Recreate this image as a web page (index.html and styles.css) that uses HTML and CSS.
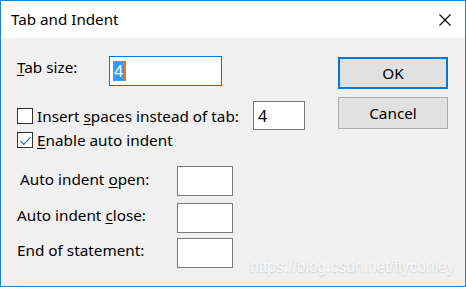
FILE: index.html
```html
<!DOCTYPE html>
<html>
<head>
<meta charset="utf-8">
<link rel="stylesheet" href="styles.css">
</head>
<body>
<div class="window">
  <div class="titlebar">
    <span class="title">Tab and Indent</span>
    <svg class="close" width="12" height="12" viewBox="0 0 12 12"><path d="M0.5 0.5L11.5 11.5M11.5 0.5L0.5 11.5" stroke="#000" stroke-width="1.1" fill="none"/></svg>
  </div>
  <div class="content">
    <div class="left">
      <div class="row r1">
        <span class="label l1"><u>T</u>ab size:</span>
        <div class="field focus w1"><span class="sel">4</span><span class="caret"></span></div>
      </div>
      <div class="row r2">
        <span class="check"></span>
        <span class="label l2">Insert <u>s</u>paces instead of tab:</span>
        <div class="field w2"><span class="val">4</span></div>
      </div>
      <div class="row r3">
        <span class="check"><svg width="14" height="14" viewBox="0 0 14 14"><polyline points="2.5,8 5.8,11.3 12.5,4.2" stroke="#2a6bb0" stroke-width="1.2" fill="none"/></svg></span>
        <span class="label l2"><u>E</u>nable auto indent</span>
      </div>
      <div class="row r4">
        <span class="label l3 ind">Auto indent <u>o</u>pen:</span>
        <div class="field w3"></div>
      </div>
      <div class="row r5">
        <span class="label l3">Auto indent <u>c</u>lose:</span>
        <div class="field w3"></div>
      </div>
      <div class="row r6">
        <span class="label l3">End of statement:</span>
        <div class="field w3"></div>
      </div>
    </div>
    <div class="right">
      <div class="btn default">OK</div>
      <div class="btn">Cancel</div>
    </div>
  </div>
  <div class="watermark">https://blog.csdn.net/flyconley</div>
</div>
</body>
</html>
```
FILE: styles.css
```css
html, body {
  margin: 0;
  padding: 0;
}
body {
  font-family: "Noto Sans", "Open Sans", sans-serif;
  font-size: 15.3px;
  color: #000;
}
.window {
  position: relative;
  width: 466px;
  height: 287px;
  box-sizing: border-box;
  border: 1px solid #1883d7;
  background: #f0f0f0;
  overflow: hidden;
}
.titlebar {
  height: 37px;
  background: #fff;
  display: flex;
  align-items: center;
  justify-content: space-between;
  padding: 0 14px 0 10px;
}
.title {
  font-size: 15.2px;
  line-height: 20px;
  margin-top: -1px;
}
.close {
  display: block;
  margin-top: 1px;
}
.content {
  display: flex;
  padding-left: 16px;
  padding-right: 17px;
}
.left {
  flex: 1;
  display: flex;
  flex-direction: column;
}
.row {
  display: flex;
  align-items: center;
}
.r1 { margin-top: 18px; height: 30px; align-items: flex-start; }
.r2 { margin-top: 15px; height: 29px; }
.r3 { margin-top: 1px; height: 18px; }
.r4 { margin-top: 17px; height: 30px; align-items: flex-start; }
.r5 { margin-top: 7px; height: 30px; align-items: flex-start; }
.r6 { margin-top: 5px; height: 30px; align-items: flex-start; }
.label {
  line-height: 20px;
  white-space: nowrap;
}
.l1 { width: 92px; padding-top: 1px; }
.l2 { margin-left: 4px; }
.r2 .l2 { width: 216px; }
.l3 { width: 160px; padding-top: 3px; }
.ind { padding-left: 3px; width: 157px; }
.r5 .l3 { padding-top: 2px; }
.r6 .l3 { padding-top: 2px; }
u { text-decoration-thickness: 1px; text-underline-offset: 2px; }
.check {
  width: 16px;
  height: 16px;
  box-sizing: border-box;
  border: 1px solid #333;
  background: #fff;
  display: flex;
  align-items: center;
  justify-content: center;
}
.check svg { display: block; }
.field {
  box-sizing: border-box;
  height: 30px;
  background: #fff;
  border: 1px solid #7a7a7a;
  display: flex;
  align-items: center;
}
.focus { border-color: #0078d7; }
.w1 { width: 113px; padding-left: 3px; }
.w2 { width: 52px; height: 29px; padding-left: 4px; }
.w3 { width: 56px; }
.sel {
  background: #3399ff;
  color: #fff;
  font-size: 16px;
  line-height: 20px;
  padding: 0 1px;
}
.caret {
  width: 2px;
  height: 20px;
  background: #e07b1a;
}
.val { font-size: 16px; line-height: 20px; }
.right {
  width: 110px;
  display: flex;
  flex-direction: column;
  gap: 8px;
  padding-top: 19px;
}
.btn {
  box-sizing: border-box;
  height: 32px;
  background: #e1e1e1;
  border: 1px solid #adadad;
  display: flex;
  align-items: center;
  justify-content: center;
  font-size: 15.3px;
}
.btn.default { border: 2px solid #0078d7; }
.watermark {
  position: absolute;
  left: 249px;
  top: 257px;
  font-family: "Liberation Sans", Arial, sans-serif;
  font-size: 15.6px;
  color: rgba(255,255,255,0.85);
  text-shadow: 0 1px 2px rgba(0,0,0,0.18);
  white-space: nowrap;
}
```
